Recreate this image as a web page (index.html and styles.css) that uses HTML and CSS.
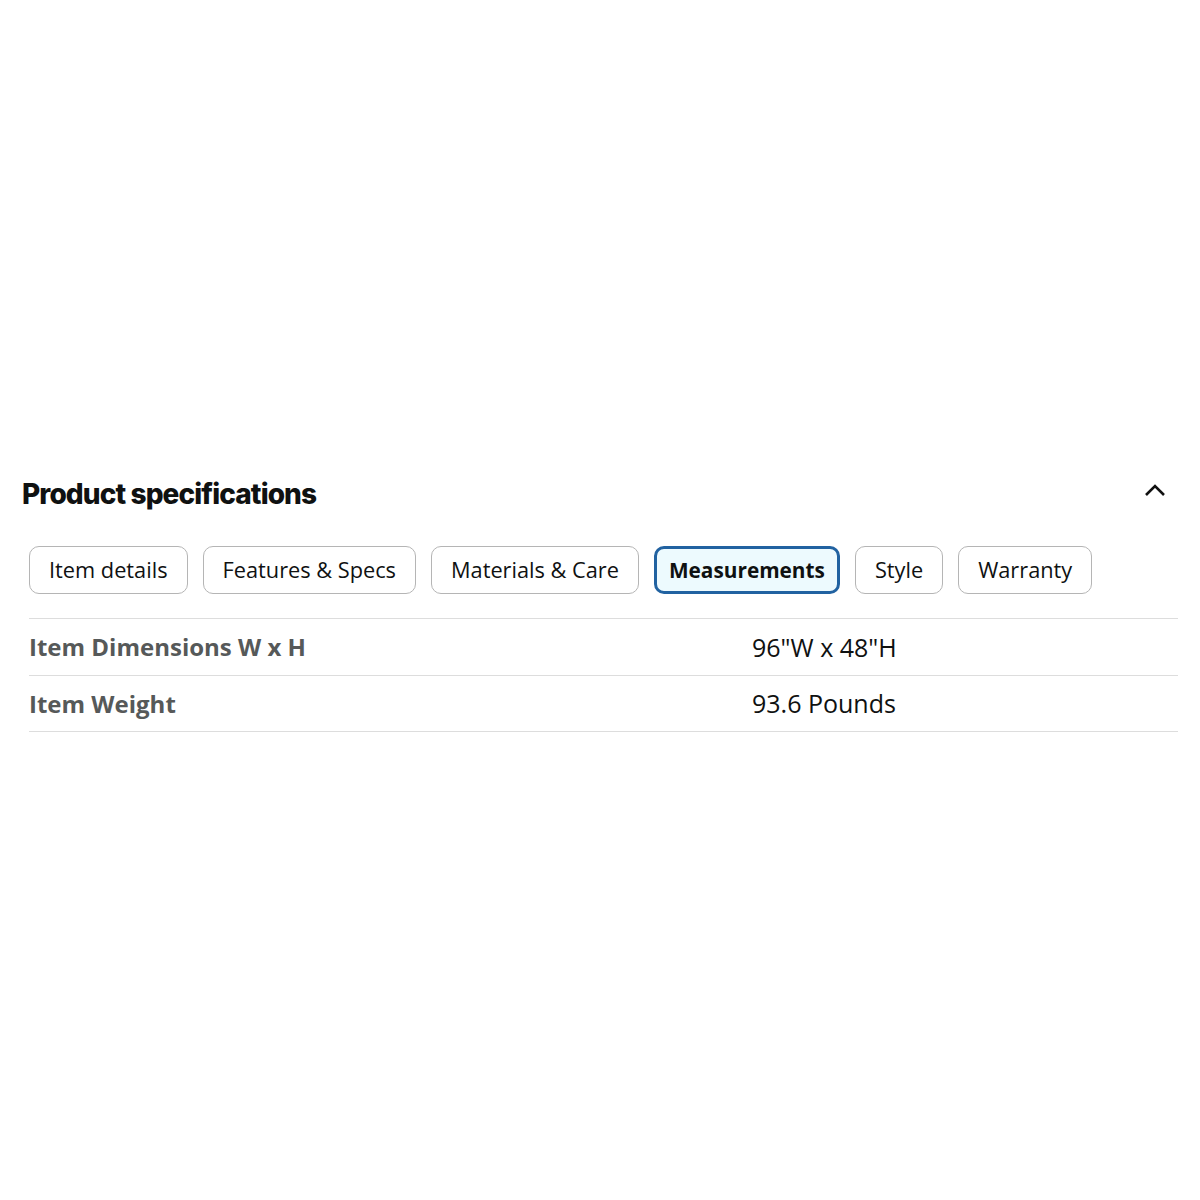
FILE: index.html
```html
<!DOCTYPE html>
<html>
<head>
<meta charset="utf-8">
<link rel="stylesheet" href="styles.css">
</head>
<body>
<section class="specs">
  <div class="specs-header">
    <h2 class="specs-title">Product specifications</h2>
    <svg class="chevron" width="22" height="14" viewBox="0 0 22 14"><path d="M2 12 L11 3 L20 12" fill="none" stroke="#111" stroke-width="2.6"/></svg>
  </div>
  <div class="tabs">
    <button class="tab">Item details</button>
    <button class="tab">Features &amp; Specs</button>
    <button class="tab">Materials &amp; Care</button>
    <button class="tab tab-active">Measurements</button>
    <button class="tab">Style</button>
    <button class="tab">Warranty</button>
  </div>
  <div class="table">
    <div class="row"><div class="label">Item Dimensions W x H</div><div class="value">96"W x 48"H</div></div>
    <div class="row"><div class="label">Item Weight</div><div class="value">93.6 Pounds</div></div>
  </div>
</section>
</body>
</html>
```
FILE: styles.css
```css
html, body { margin: 0; padding: 0; background: #fff; }
body { font-family: "Open Sans", "Noto Sans", sans-serif; color: #0f1111; }
.specs { padding: 474px 22px 0 22px; }
.specs-header { display: flex; align-items: center; justify-content: space-between; height: 40px; }
.specs-title { margin: 0; font-family: Inter, "Liberation Sans", sans-serif; font-weight: 800; font-size: 28px; letter-spacing: -0.9px; color: #0f1111; }
.chevron { margin-right: 12px; margin-bottom: 8px; }
.tabs { display: flex; gap: 15px; margin: 32px 0 0 7px; }
.tab { font-family: "Open Sans", sans-serif; font-size: 21.75px; line-height: 1; color: #0f1111; background: #fff; border: 1px solid #b5b5b5; border-radius: 10px; height: 48px; padding: 0 19px; }
.tab-active { border: 3px solid #2162a1; background: #edfafe; font-weight: 700; font-size: 20.8px; padding: 0 12px; }
.table { margin: 24px 0 0 7px; border-top: 1px solid #ddd; }
.row { display: flex; height: 55.5px; align-items: center; border-bottom: 1px solid #ddd; }
.label { width: 723px; font-weight: 700; color: #565959; font-size: 24px; }
.value { color: #0f1111; font-size: 25px; }
```
